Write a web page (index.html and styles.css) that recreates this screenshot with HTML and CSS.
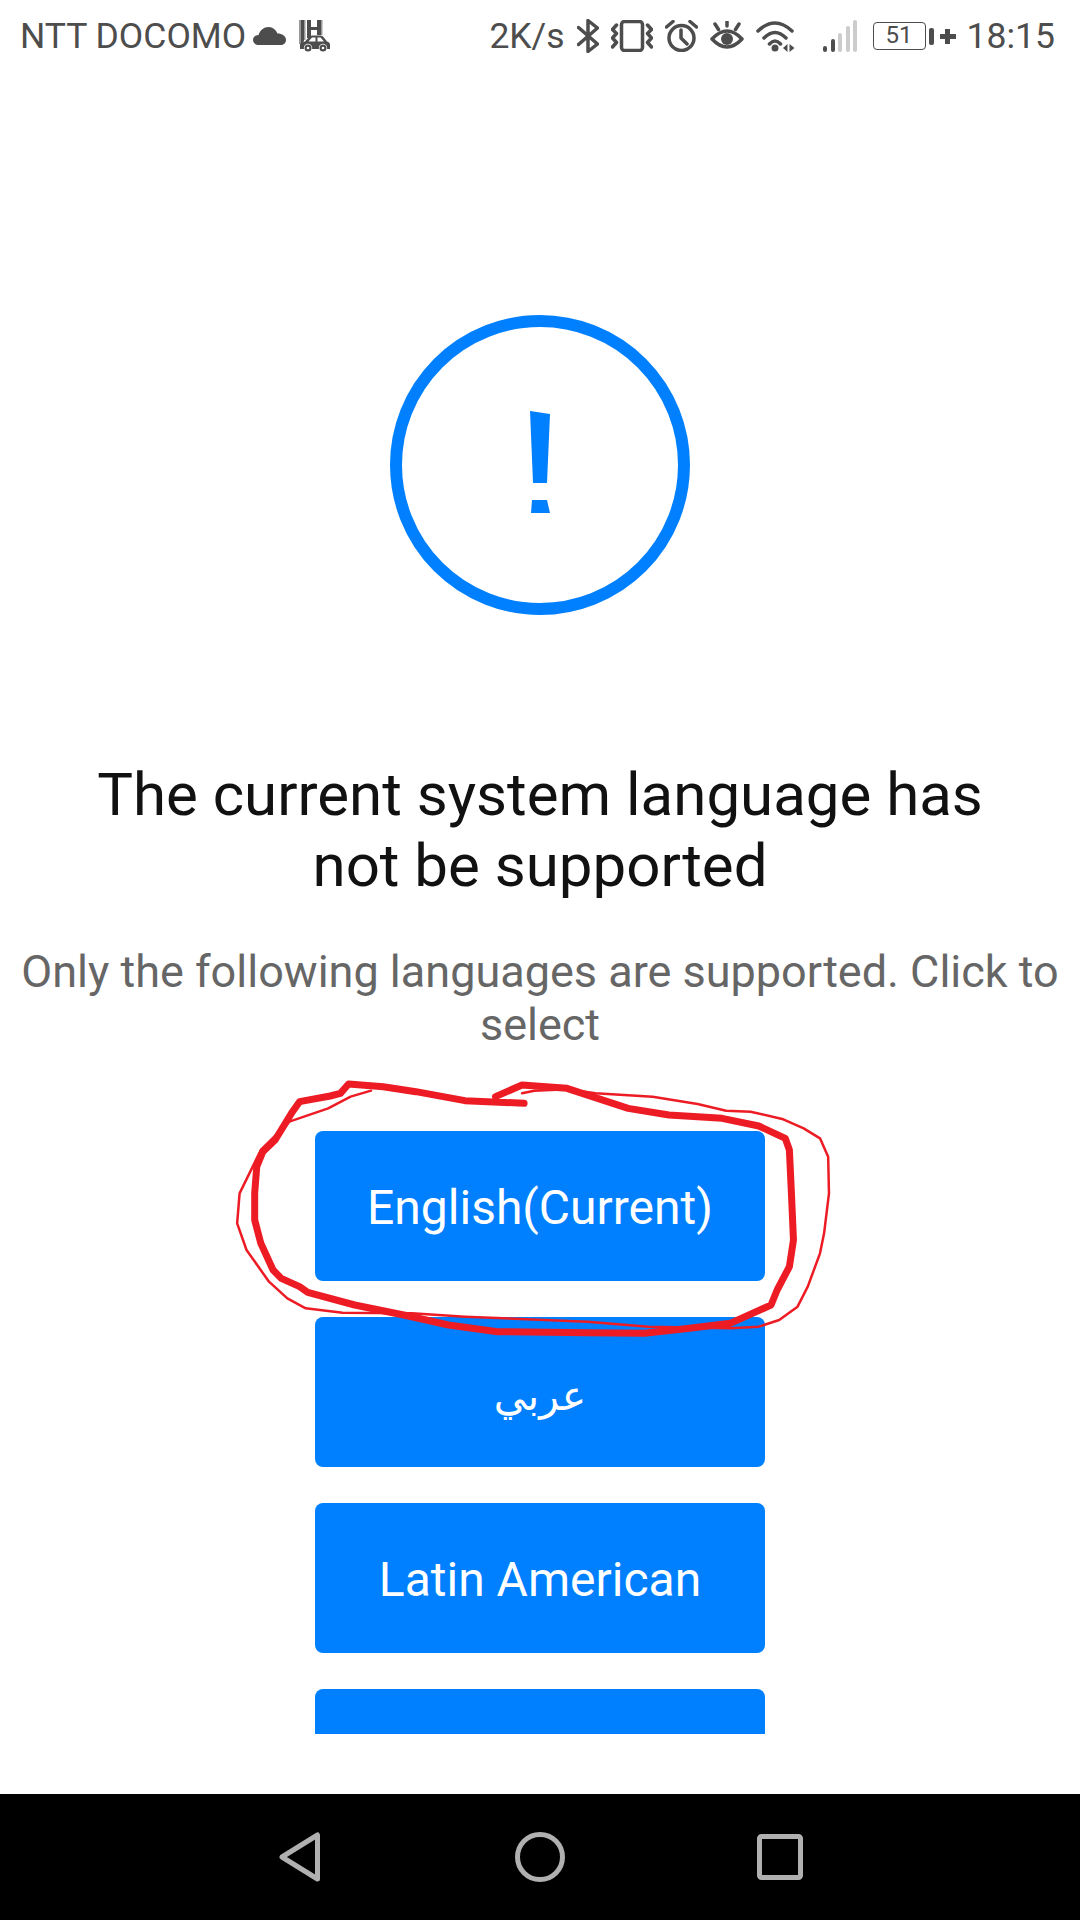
FILE: index.html
```html
<!DOCTYPE html>
<html lang="en">
<head>
    <meta charset="UTF-8">
    <meta name="viewport" content="width=device-width, initial-scale=1.0">
    <title>Language not supported</title>
    <link rel="stylesheet" href="styles.css">
</head>
<body>
<div class="screen">
    <div class="status-bar">
        <div class="status-left">
            <span>NTT DOCOMO</span>
            <svg class="ic-cloud" width="33" height="18" viewBox="0 0 33 18"><path d="M6 18C2 18 0 15.500 0 13C0 10 2.500 8 5.500 8C7 3 11 0 15.500 0C20 0 23 3 24.500 6.500C29 6.500 33 9 33 13C33 16 30.500 18 27.500 18Z"/></svg>
            <svg class="ic-parking" width="31" height="32" viewBox="0 0 31 32">
                <path class="light" d="M0 0H2V24H0ZM5 0H6.500V20H5ZM22 0H23.500V15H22Z"/>
                <path d="M2 0H5V21L2 25ZM8 0H12V7H18V0H22V15H18V10H12V18H8Z"/>
                <path d="M1 29V25C1 23.500 2 22.500 6 21.500L10 17C11 16 12 15.500 13 15.500H21C22.500 15.500 23.500 16 24.500 17L28 21.500C30 22 31 23 31 25V29Z"/>
                <path class="cut" d="M13 17.500H16.500V21.500H9.500ZM18.500 17.500H21.500L25 21.500H18.500Z"/>
                <circle class="cut" cx="9" cy="28" r="4.200"/><circle class="cut" cx="24" cy="28" r="4.200"/>
                <circle cx="9" cy="28" r="3.500"/><circle cx="24" cy="28" r="3.500"/>
                <circle class="cut" cx="9" cy="28" r="1.300"/><circle class="cut" cx="24" cy="28" r="1.300"/>
            </svg>
        </div>
        <div class="status-right">
            <span>2K/s</span>
            <svg class="line" width="22" height="34" viewBox="0 0 22 34"><path d="M1.500 8.500L20.500 25L11 32.500V1.500L20.500 9L1.500 25.500"/></svg>
            <svg class="line" width="42" height="32" viewBox="0 0 42 32">
                <rect x="10.500" y="1.500" width="21" height="29" rx="3"/>
                <path d="M5.500 5L1.500 9.500L5.500 13.500L1.500 18L5.500 22.500L1.500 27"/>
                <path d="M36.500 5L40.500 9.500L36.500 13.500L40.500 18L36.500 22.500L40.500 27"/>
            </svg>
            <svg class="line" width="33" height="32" viewBox="0 0 33 32">
                <circle cx="16.500" cy="18" r="12.500"/>
                <path d="M16 10V18L22 24M1.500 7L8 1.500M31.500 7L25 1.500"/>
            </svg>
            <svg class="line" width="34" height="30" viewBox="0 0 34 30">
                <path d="M2 18Q17 2 32 18Q17 34 2 18Z"/>
                <circle class="fill" cx="17" cy="18" r="6"/>
                <path d="M17 0V5M5 3L8.500 8.500M29 3L25.500 8.500"/>
            </svg>
            <svg class="line" width="39" height="32" viewBox="0 0 39 32">
                <path d="M2 11Q19 -5 36 11M8 18Q19 7 30 18M13.500 24Q19 18 24.500 24"/>
                <circle class="fill" cx="19" cy="28" r="3.500"/>
                <path class="fill" d="M31.500 24V32L27 28ZM33.500 24V32L38.500 28Z"/>
            </svg>
            <svg class="ic-signal" width="34" height="32" viewBox="0 0 34 32">
                <rect class="on" x="0" y="26" width="4" height="6" rx="2"/>
                <rect class="on" x="8" y="19" width="4" height="13" rx="2"/>
                <rect x="15" y="13" width="4" height="19" rx="2"/>
                <rect x="23" y="6" width="4" height="26" rx="2"/>
                <rect x="30" y="0" width="4" height="32" rx="2"/>
            </svg>
            <div class="battery-group">
                <div class="battery">51</div>
                <div class="battery-cap"></div>
                <div class="charge-plus"></div>
            </div>
            <span>18:15</span>
        </div>
    </div>

    <div class="content">
        <svg class="warn-icon" width="300" height="300" viewBox="0 0 300 300">
            <circle class="warn-ring" cx="150" cy="150" r="144"/>
            <path class="warn-mark" d="M140 96L160 99L157 168H143ZM142 185H157L160 198H141Z"/>
        </svg>
        <h1 class="title">The current system language has<br>not be supported</h1>
        <p class="subtitle">Only the following languages are supported. Click to select</p>
        <div class="lang-list">
            <button class="lang-btn">English(Current)</button>
            <button class="lang-btn lang-ar" dir="rtl">عربي</button>
            <button class="lang-btn">Latin American</button>
            <button class="lang-btn"></button>
        </div>
    </div>

    <div class="nav-bar">
        <svg class="nav-icon" width="42" height="50" viewBox="0 0 42 50"><path d="M38.500 3V47L3 25Z"/></svg>
        <svg class="nav-icon" width="50" height="50" viewBox="0 0 50 50"><circle cx="25" cy="25" r="22.500"/></svg>
        <svg class="nav-icon" width="46" height="46" viewBox="0 0 46 46"><rect x="2.500" y="2.500" width="41" height="41" rx="2"/></svg>
    </div>

    <!-- hand drawn marker ring around the first button -->
    <svg class="scribble" width="640" height="290" viewBox="0 0 1568 870" preserveAspectRatio="none">
        <path class="scribble-thin" d="M740 100L770 92L850 88L920 100L1060 110L1170 132L1240 152L1300 155L1380 178L1430 205L1470 235L1490 290L1492 400L1480 520L1470 580L1440 680L1415 740L1370 780L1320 800L1250 805L1050 800L900 785L600 770L470 760L300 758L210 745L165 715L120 665L65 570L42 490L48 400L100 270L170 185L265 145L320 110L370 92"/>
        <path class="scribble-thick" d="M745 130L600 122L480 95L400 80L315 72L295 100L270 108L195 125L175 160L135 240L105 275L90 320L85 400L85 480L100 550L130 630L150 655L195 680L215 697L330 735L450 765L560 795L680 815L900 818L1040 820L1150 805L1250 790L1350 735L1365 690L1395 620L1405 540L1400 400L1395 270L1385 235L1320 198L1230 175L1100 165L1000 145L850 85L740 75L675 110"/>
    </svg>
</div>
</body>
</html>
```

FILE: styles.css
```css
* {
    box-sizing: border-box;
}
body {
    margin: 0;
    background: #fff;
    font-family: Roboto, "Noto Sans", sans-serif;
}
.screen {
    position: relative;
    width: 1080px;
    height: 1920px;
    display: flex;
    flex-direction: column;
    overflow: hidden;
}

/* status bar */
.status-bar {
    height: 72px;
    padding: 0 25px 0 20px;
    display: flex;
    justify-content: space-between;
    align-items: center;
    color: #4d4d4d;
    font-size: 35.500px;
    flex: none;
}
.status-left, .status-right {
    display: flex;
    align-items: center;
}
.status-left svg {
    fill: #4d4d4d;
}
.ic-cloud {
    margin-left: 7px;
}
.ic-parking {
    margin-left: 13px;
}
.ic-parking .light {
    fill: #999;
}
.ic-parking .cut {
    fill: #fff;
}
.status-right {
    gap: 12px;
}
.line {
    fill: none;
    stroke: #4d4d4d;
    stroke-width: 3.500;
    stroke-linecap: round;
    stroke-linejoin: round;
}
.line .fill {
    fill: #4d4d4d;
    stroke: none;
}
.ic-signal {
    margin-left: 16px;
    fill: #ccc;
}
.ic-signal .on {
    fill: #4d4d4d;
}
.battery-group {
    margin-left: 4px;
    margin-right: -1px;
    display: flex;
    align-items: center;
}
.battery {
    width: 53px;
    height: 28px;
    border: 1.500px solid #4d4d4d;
    border-radius: 4px;
    font-size: 24px;
    line-height: 25px;
    text-align: center;
}
.battery-cap {
    width: 5px;
    height: 17px;
    margin-left: 3px;
    background: #4d4d4d;
    border-radius: 2px;
}
.charge-plus {
    width: 16px;
    height: 15px;
    margin-left: 6px;
    background:
        linear-gradient(#4d4d4d, #4d4d4d) center / 16px 5px no-repeat,
        linear-gradient(#4d4d4d, #4d4d4d) center / 5px 15px no-repeat;
}

/* main */
.content {
    flex: 1;
    min-height: 0;
    display: flex;
    flex-direction: column;
    align-items: center;
    padding-top: 243px;
}
.warn-icon {
    flex: none;
}
.warn-ring {
    fill: none;
    stroke: #0080ff;
    stroke-width: 12;
}
.warn-mark {
    fill: #0080ff;
}
.title {
    margin: 144px 0 0;
    font-size: 60px;
    font-weight: 400;
    line-height: 71px;
    color: #111;
    text-align: center;
}
.subtitle {
    margin: 44px 0 0;
    padding: 0 20px;
    font-size: 45px;
    line-height: 53px;
    color: #666;
    text-align: center;
}
.lang-list {
    margin-top: 80px;
    width: 450px;
    height: 603px;
    overflow: hidden;
    flex: none;
    display: flex;
    flex-direction: column;
    gap: 36px;
}
.lang-btn {
    flex: none;
    width: 450px;
    height: 150px;
    padding: 2px 0 0;
    border: none;
    border-radius: 8px;
    background: #0080ff;
    color: #fff;
    font-family: Roboto, sans-serif;
    font-size: 48px;
}
.lang-ar {
    padding-top: 8px;
    font-family: "DejaVu Sans", sans-serif;
    font-size: 41px;
}

/* nav bar */
.nav-bar {
    flex: none;
    height: 126px;
    background: #000;
    display: grid;
    grid-template-columns: repeat(3, 1fr);
    justify-items: center;
    align-items: center;
    padding: 0 180px;
}
.nav-icon {
    fill: none;
    stroke: #b0b0b0;
    stroke-width: 5;
    stroke-linejoin: round;
}

/* marker overlay */
.scribble {
    position: absolute;
    left: 220px;
    top: 1060px;
    fill: none;
    stroke: #ed1c24;
    stroke-linejoin: round;
    stroke-linecap: round;
}
.scribble path {
    vector-effect: non-scaling-stroke;
}
.scribble-thin {
    stroke-width: 2.500px;
}
.scribble-thick {
    stroke-width: 7px;
}
```
